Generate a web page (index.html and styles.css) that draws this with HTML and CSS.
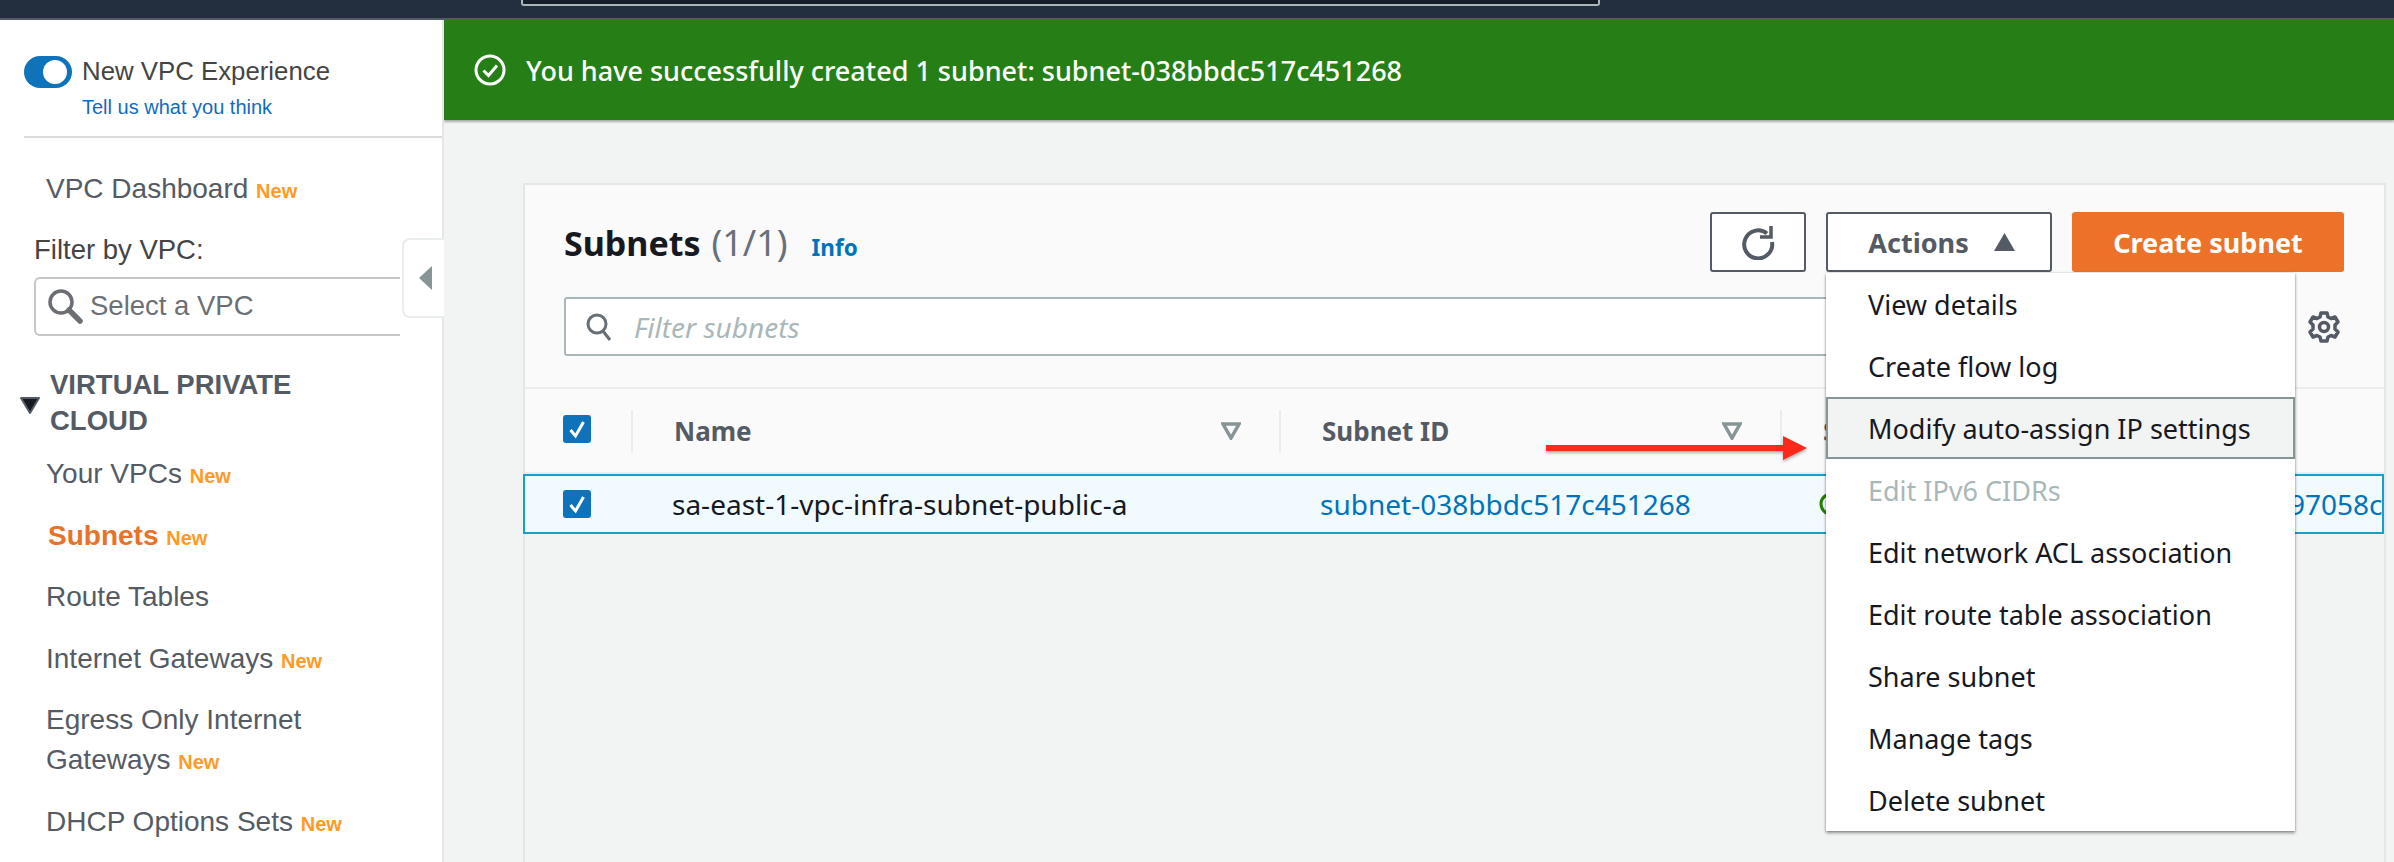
FILE: index.html
```html
<!DOCTYPE html>
<html lang="en">
<head>
<meta charset="utf-8">
<title>Subnets</title>
<link rel="stylesheet" href="styles.css">
</head>
<body>
<header class="topbar"><div class="topsearch"></div></header>
<div class="main">
  <aside class="sidebar">
    <div class="exp">
      <span class="toggle"><span class="knob"></span></span>
      <div class="exp-text">
        <div class="exp-title">New VPC Experience</div>
        <a class="exp-link">Tell us what you think</a>
      </div>
    </div>
    <div class="navitem dash">VPC Dashboard <span class="new">New</span></div>
    <div class="filter-label">Filter by VPC:</div>
    <div class="vpc-select">
      <svg class="mag" width="36" height="36" viewBox="0 0 36 36"><circle cx="14" cy="14" r="11" fill="none" stroke="#6b6f73" stroke-width="3.5"/><path d="M22 22l11 11" stroke="#6b6f73" stroke-width="5.5" stroke-linecap="round"/></svg>
      <span>Select a VPC</span>
    </div>
    <div class="section">
      <svg class="sec-caret" width="20" height="17" viewBox="0 0 20 17"><path d="M1 1h18L10 16z" fill="#16191f" stroke="#545b64" stroke-width="2" stroke-linejoin="round"/></svg>
      <div class="sec-title">VIRTUAL PRIVATE CLOUD</div>
    </div>
    <nav class="navlist">
      <div class="navitem">Your VPCs <span class="new">New</span></div>
      <div class="navitem active">Subnets <span class="new">New</span></div>
      <div class="navitem">Route Tables</div>
      <div class="navitem">Internet Gateways <span class="new">New</span></div>
      <div class="navitem">Egress Only Internet Gateways <span class="new">New</span></div>
      <div class="navitem">DHCP Options Sets <span class="new">New</span></div>
    </nav>
    <div class="collapse"><svg width="13" height="24" viewBox="0 0 13 24"><path d="M13 0v24L0 12z" fill="#879596"/></svg></div>
  </aside>
  <main class="content">
    <div class="banner">
      <svg width="32" height="32" viewBox="0 0 32 32"><circle cx="16" cy="16" r="14" fill="none" stroke="#fff" stroke-width="3"/><path d="M9.500 16.500l5 5 8.500-10" fill="none" stroke="#fff" stroke-width="3"/></svg>
      <span>You have successfully created 1 subnet: subnet-038bbdc517c451268</span>
    </div>
    <section class="card">
      <div class="card-head">
        <div class="title-row">
          <h1 class="title">Subnets <span class="count">(1/1)</span></h1>
          <a class="info">Info</a>
          <div class="actions">
            <button class="btn btn-icon"><svg width="36" height="36" viewBox="0 0 36 36"><path d="M27 9.500A14 14 0 1 0 32 18" fill="none" stroke="#545b64" stroke-width="4"/><path d="M31 2v11H20" fill="none" stroke="#545b64" stroke-width="3.500"/></svg></button>
            <button class="btn btn-actions">Actions<svg width="21" height="18" viewBox="0 0 21 18"><path d="M10.500 0L21 18H0z" fill="#545b64"/></svg></button>
            <button class="btn btn-primary">Create subnet</button>
          </div>
        </div>
        <div class="filter-row">
          <div class="filter-input">
            <svg width="26" height="28" viewBox="0 0 26 28"><circle cx="11" cy="11" r="9" fill="none" stroke="#687078" stroke-width="3"/><path d="M17 18l7 9" stroke="#687078" stroke-width="3"/></svg>
            <span>Filter subnets</span>
          </div>
          <svg class="gear" width="34" height="34" viewBox="0 0 34 34"><path d="M14 3h6l1 4 3 1.500 4-1.500 3 5-3 3v4l3 3-3 5-4-1.500-3 1.500-1 4h-6l-1-4-3-1.500-4 1.500-3-5 3-3v-4l-3-3 3-5 4 1.500 3-1.500z" fill="none" stroke="#545b64" stroke-width="3.500" stroke-linejoin="round"/><circle cx="17" cy="17" r="4.500" fill="none" stroke="#545b64" stroke-width="3.500"/></svg>
        </div>
      </div>
      <div class="grid thead">
        <div class="cell-check"><span class="check"><svg width="28" height="28" viewBox="0 0 28 28"><path d="M7.500 15l5 6 8-14" fill="none" stroke="#fff" stroke-width="3"/></svg></span></div>
        <div class="th">Name<svg width="20" height="18" viewBox="0 0 20 18"><path d="M2 2h16L10 16z" fill="none" stroke="#879596" stroke-width="3.500"/></svg></div>
        <div class="th">Subnet ID<svg width="20" height="18" viewBox="0 0 20 18"><path d="M2 2h16L10 16z" fill="none" stroke="#879596" stroke-width="3.500"/></svg></div>
        <div class="th">State</div>
      </div>
      <div class="grid trow">
        <div class="cell-check"><span class="check"><svg width="28" height="28" viewBox="0 0 28 28"><path d="M7.500 15l5 6 8-14" fill="none" stroke="#fff" stroke-width="3"/></svg></span></div>
        <div class="td">sa-east-1-vpc-infra-subnet-public-a</div>
        <div class="td"><a class="link">subnet-038bbdc517c451268</a></div>
        <div class="td state"><svg width="24" height="24" viewBox="0 0 24 24"><circle cx="12" cy="12" r="10" fill="none" stroke="#1d8102" stroke-width="3"/></svg></div>
        <div class="td vpc"><a class="link">97058c</a></div>
      </div>
      <svg class="arrow" width="270" height="36" viewBox="0 0 270 36"><defs><filter id="sh"><feDropShadow dx="0" dy="2" stdDeviation="1.500" flood-color="#000" flood-opacity=".3"/></filter></defs><path d="M2 15h237V6l24 12-24 12v-9H2z" fill="#fb2a1e" filter="url(#sh)"/></svg>
      <ul class="menu">
        <li>View details</li>
        <li>Create flow log</li>
        <li class="hover">Modify auto-assign IP settings</li>
        <li class="disabled">Edit IPv6 CIDRs</li>
        <li>Edit network ACL association</li>
        <li>Edit route table association</li>
        <li>Share subnet</li>
        <li>Manage tags</li>
        <li>Delete subnet</li>
      </ul>
    </section>
  </main>
</div>
</body>
</html>
```

FILE: styles.css
```css
* { box-sizing: border-box; }
html, body { margin: 0; padding: 0; height: 862px; overflow: hidden; }
body { background: #f2f3f3; font-family: "Noto Sans", sans-serif; font-size: 27px; color: #16191f; }

.topbar { height: 20px; background: #232f3e; border-bottom: 2px solid #545b64; padding-left: 521px; }
.topsearch { width: 1079px; height: 6px; background: #161e2a; border: 2px solid #aab7b8; border-top: 0; border-radius: 0 0 3px 3px; }

.main { display: flex; height: 842px; }

.sidebar { position: relative; width: 444px; flex: none; background: #fff; border-right: 2px solid #e4e7e7; font-family: "Liberation Sans", Arial, sans-serif; font-size: 27.5px; color: #545b64; }
.exp { display: flex; margin-left: 24px; height: 118px; padding-top: 35px; border-bottom: 2px solid #dcdcdc; }
.toggle { width: 48px; height: 32px; margin-top: 1px; border-radius: 16px; background: #0f73bb; display: flex; justify-content: flex-end; align-items: center; padding-right: 5px; flex: none; }
.knob { width: 24px; height: 24px; border-radius: 50%; background: #fff; }
.exp-text { margin-left: 10px; }
.exp-title { font-size: 25.8px; line-height: 32px; color: #444; }
.exp-link { display: block; margin-top: 7px; font-size: 20px; line-height: 26px; color: #0f6cc0; }

.navitem { padding-left: 46px; padding-right: 40px; font-size: 28px; line-height: 40px; }
.dash { margin-top: 31px; }
.new { font-size: 20px; line-height: 1; font-weight: 700; color: #ff9a27; }
.filter-label { margin: 20.5px 0 7px 34px; line-height: 40px; color: #444; }
.vpc-select { display: flex; align-items: center; gap: 7px; height: 59px; margin-left: 34px; width: 366px; padding-left: 11px; border: 2px solid #c6c6c6; border-right: 0; border-radius: 6px 0 0 6px; color: #6c7075; }
.section { display: flex; align-items: center; margin: 31.5px 0 0 20px; }
.sec-caret { flex: none; margin-top: 4px; }
.sec-title { margin-left: 10px; width: 280px; font-size: 27.5px; font-weight: 700; line-height: 36px; }
.navlist { display: flex; flex-direction: column; gap: 21.5px; margin-top: 15px; }
.active { color: #e9722a; font-weight: 700; padding-left: 48px; }
.active .new { color: #ff9a27; }
.collapse { position: absolute; left: 402px; top: 218px; width: 42px; height: 80px; display: flex; align-items: center; padding-left: 15px; background: #fff; border: 2px solid #eaeded; border-right: 0; border-radius: 8px 0 0 8px; }

.content { flex: 1; min-width: 0; }
.banner { display: flex; align-items: center; gap: 20px; height: 100px; padding-left: 30px; background: #257f16; color: #fff; box-shadow: 0 2px 2px rgba(0,0,0,.3); font-weight: 500; }

.card { position: relative; width: 1863px; height: 700px; margin: 63px 0 0 79px; border: 2px solid #e4e7e7; border-bottom: 0; }
.card-head { background: #fafafa; padding: 27px 40px 31px 39px; border-bottom: 2px solid #eaeded; }
.title-row { display: flex; align-items: center; height: 60px; }
.title { margin: 0; font-size: 34px; font-weight: 700; }
.count { font-size: 36px; font-weight: 400; color: #687078; margin-left: 2px; }
.info { margin-left: 24px; margin-top: 10px; font-size: 22.5px; font-weight: 700; color: #0073bb; }
.actions { display: flex; gap: 20px; margin-left: auto; }
.btn { height: 60px; border-radius: 3px; font: 700 27px "Noto Sans", sans-serif; display: flex; align-items: center; justify-content: center; }
.btn-icon { width: 96px; background: #fff; border: 2px solid #545b64; padding: 0; }
.btn-actions { width: 226px; gap: 25px; background: #fff; border: 2px solid #545b64; color: #545b64; padding: 0 0 0 5px; }
.btn-primary { width: 272px; background: #ec7229; border: 2px solid #ec7229; color: #fff; }

.filter-row { display: flex; align-items: center; margin-top: 25px; gap: 18px; }
.filter-input { flex: 1; height: 59px; display: flex; align-items: center; gap: 22px; padding-left: 20px; background: #fff; border: 2px solid #aab7b8; border-radius: 3px; }
.filter-input span { font-size: 28px; font-style: italic; color: #aab7b8; }
.gear { flex: none; margin-right: 3px; }

.grid { display: grid; grid-template-columns: 106px 648px 501px 509px 1fr; align-items: center; }
.thead { height: 85px; background: #fafafa; border-bottom: 2px solid #eaeded; }
.thead .check { margin-top: -3px; }
.cell-check { padding-left: 38px; display: flex; }
.check { display: block; width: 28px; height: 28px; border-radius: 3px; background: #0f73bb; }
.check svg { display: block; }
.th { display: flex; align-items: center; justify-content: space-between; height: 42px; padding: 0 38px 0 41px; border-left: 2px solid #eaeded; font-size: 26px; font-weight: 700; color: #545b64; }
.trow { height: 60px; margin-left: -2px; background: #f1faff; border: 2px solid #16a2c7; overflow: hidden; }
.td { white-space: nowrap; padding-left: 41px; font-size: 28px; }
.td svg { display: block; }
.state { padding-left: 39px; }
.vpc { padding-left: 0; }
.link { color: #0073bb; }

.arrow { position: absolute; left: 1019px; top: 245px; }

.menu { position: absolute; left: 1301px; top: 88px; width: 469px; margin: 0; padding: 0; list-style: none; background: #fff; box-shadow: 0 2px 3px rgba(0,0,0,.4), 0 0 2px rgba(0,0,0,.2); }
.menu li { height: 62px; display: flex; align-items: center; padding-left: 40px; border: 2px solid transparent; }
.menu .hover { background: #f2f3f3; border-color: #879596; }
.menu .disabled { color: #aab7b8; }
```
